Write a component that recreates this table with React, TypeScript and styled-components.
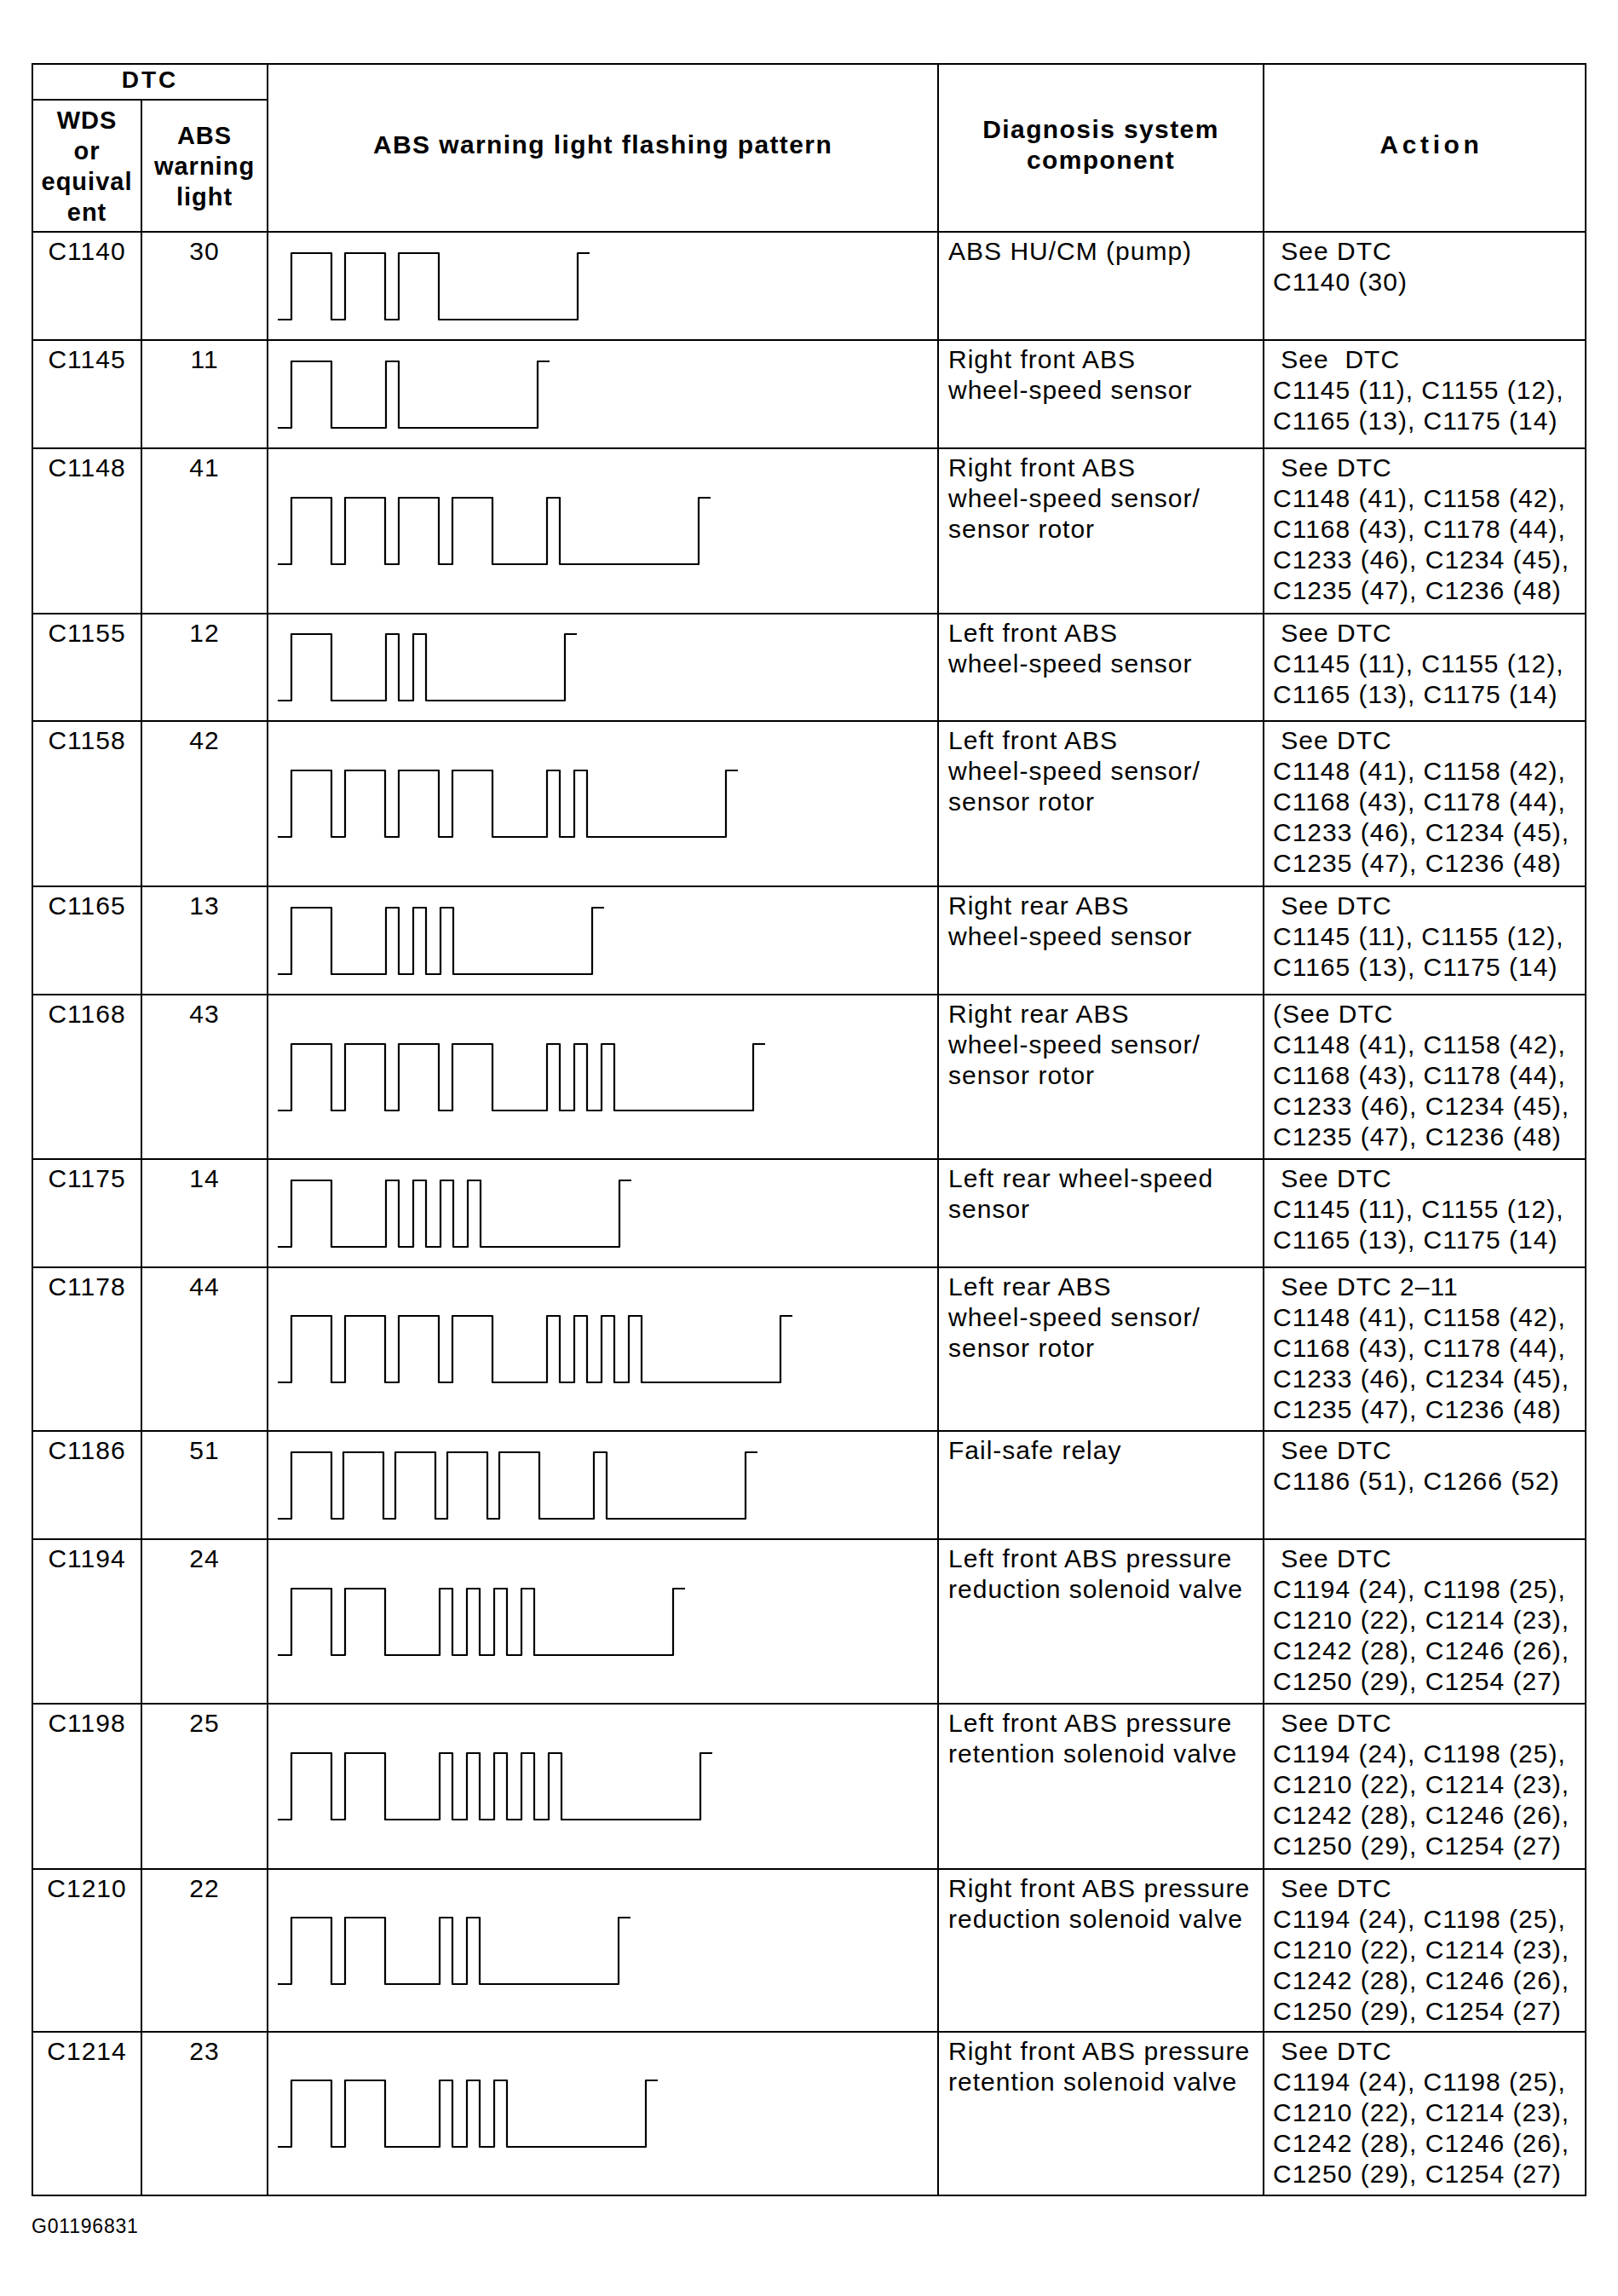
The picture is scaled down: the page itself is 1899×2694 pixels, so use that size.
import styled, { createGlobalStyle } from "styled-components";

const GlobalStyle = createGlobalStyle`
  body {
    margin: 0;
    background: #ffffff;
    color: #000000;
    font-family: "Liberation Sans", Arial, Helvetica, sans-serif;
  }
`;

const Page = styled.div`
  padding: 74px 0 40px 37px;
`;

const Table = styled.table`
  border-collapse: collapse;
  table-layout: fixed;
  width: 1825px;
`;

const HeadCell = styled.th<{ $spacing?: number; $size?: number; $lift?: number; $shift?: number }>`
  border: 2px solid #000;
  padding: 0 0 ${(p) => p.$lift ?? 0}px ${(p) => p.$shift ?? 0}px;
  font-weight: 700;
  font-size: ${(p) => p.$size ?? 29}px;
  line-height: 36px;
  letter-spacing: ${(p) => p.$spacing ?? 1.8}px;
  text-align: center;
  vertical-align: middle;
`;

const BodyRow = styled.tr<{ $h: number }>`
  height: ${(p) => p.$h}px;
`;

const TextCell = styled.td<{ $align?: "left" | "center"; $pad?: number }>`
  border: 2px solid #000;
  padding: 4px 0 0 ${(p) => p.$pad ?? 0}px;
  vertical-align: top;
  text-align: ${(p) => p.$align ?? "left"};
  font-size: 30px;
  line-height: 36px;
  letter-spacing: 1px;
  white-space: nowrap;
`;

const WaveCell = styled.td`
  border: 2px solid #000;
  padding: 0;
  vertical-align: middle;
`;

const Line = styled.div`
  display: block;
`;

const Wave = styled.svg`
  display: block;
`;

const Footnote = styled.div`
  margin-top: 22px;
  font-size: 23px;
  letter-spacing: 0.8px;
`;

type Row = {
  wds: string;
  abs: string;
  h: number;
  component: string[];
  action: string[];
};

const groupA = ["C1145 (11), C1155 (12),", "C1165 (13), C1175 (14)"];
const groupB = [
  "C1148 (41), C1158 (42),",
  "C1168 (43), C1178 (44),",
  "C1233 (46), C1234 (45),",
  "C1235 (47), C1236 (48)",
];
const groupC = [
  "C1194 (24), C1198 (25),",
  "C1210 (22), C1214 (23),",
  "C1242 (28), C1246 (26),",
  "C1250 (29), C1254 (27)",
];
const see = "\u00a0See DTC";

const rows: Row[] = [
  { wds: "C1140", abs: "30", h: 127, component: ["ABS HU/CM (pump)"], action: [see, "C1140 (30)"] },
  { wds: "C1145", abs: "11", h: 127, component: ["Right front ABS", "wheel-speed sensor"], action: ["\u00a0See\u00a0 DTC", ...groupA] },
  { wds: "C1148", abs: "41", h: 194, component: ["Right front ABS", "wheel-speed sensor/", "sensor rotor"], action: [see, ...groupB] },
  { wds: "C1155", abs: "12", h: 126, component: ["Left front ABS", "wheel-speed sensor"], action: [see, ...groupA] },
  { wds: "C1158", abs: "42", h: 194, component: ["Left front ABS", "wheel-speed sensor/", "sensor rotor"], action: [see, ...groupB] },
  { wds: "C1165", abs: "13", h: 127, component: ["Right rear ABS", "wheel-speed sensor"], action: [see, ...groupA] },
  { wds: "C1168", abs: "43", h: 193, component: ["Right rear ABS", "wheel-speed sensor/", "sensor rotor"], action: ["(See DTC", ...groupB] },
  { wds: "C1175", abs: "14", h: 127, component: ["Left rear wheel-speed", "sensor"], action: [see, ...groupA] },
  { wds: "C1178", abs: "44", h: 192, component: ["Left rear ABS", "wheel-speed sensor/", "sensor rotor"], action: ["\u00a0See DTC 2\u201311", ...groupB] },
  { wds: "C1186", abs: "51", h: 127, component: ["Fail-safe relay"], action: [see, "C1186 (51), C1266 (52)"] },
  { wds: "C1194", abs: "24", h: 193, component: ["Left front ABS pressure", "reduction solenoid valve"], action: [see, ...groupC] },
  { wds: "C1198", abs: "25", h: 194, component: ["Left front ABS pressure", "retention solenoid valve"], action: [see, ...groupC] },
  { wds: "C1210", abs: "22", h: 191, component: ["Right front ABS pressure", "reduction solenoid valve"], action: [see, ...groupC] },
  { wds: "C1214", abs: "23", h: 192, component: ["Right front ABS pressure", "retention solenoid valve"], action: [see, ...groupC] },
];

// flashing pattern: tens digit = long flashes, units digit = short flashes
const HIGH = 2;
const LOW = 80;

function wavePath(code: string): string {
  const longs = Number(code[0]);
  const shorts = Number(code[1]);
  let x = 27;
  let d = `M 11 ${LOW} H ${x}`;
  for (let i = 0; i < longs; i++) {
    d += ` V ${HIGH} H ${x + 47} V ${LOW}`;
    x += 47;
    if (i < longs - 1) {
      x += longs > 4 ? 14 : 16;
      d += ` H ${x}`;
    }
  }
  if (shorts > 0) {
    x += 64;
    d += ` H ${x}`;
    for (let i = 0; i < shorts; i++) {
      d += ` V ${HIGH} H ${x + 15} V ${LOW}`;
      x += 15;
      if (i < shorts - 1) {
        x += 17;
        d += ` H ${x}`;
      }
    }
  }
  x += 163;
  d += ` H ${x} V ${HIGH} H ${x + 14}`;
  return d;
}

function Lines({ items }: { items: string[] }) {
  return (
    <>
      {items.map((t, i) => (
        <Line key={i}>{t}</Line>
      ))}
    </>
  );
}

function App() {
  return (
    <Page>
      <GlobalStyle />
      <Table>
        <colgroup>
          <col style={{ width: 128 }} />
          <col style={{ width: 148 }} />
          <col style={{ width: 787 }} />
          <col style={{ width: 382 }} />
          <col style={{ width: 378 }} />
        </colgroup>
        <thead>
          <tr style={{ height: 40 }}>
            <HeadCell colSpan={2} $size={28} $spacing={3} $lift={4}>
              DTC
            </HeadCell>
            <HeadCell rowSpan={2} $size={30} $spacing={1.4} $lift={8}>
              ABS warning light flashing pattern
            </HeadCell>
            <HeadCell rowSpan={2} $size={30} $spacing={1.4} $lift={8}>
              Diagnosis system
              <br />
              component
            </HeadCell>
            <HeadCell rowSpan={2} $size={30} $spacing={4.6} $lift={8} $shift={16}>
              Action
            </HeadCell>
          </tr>
          <tr style={{ height: 155 }}>
            <HeadCell $spacing={1}>
              WDS
              <br />
              or
              <br />
              equival
              <br />
              ent
            </HeadCell>
            <HeadCell $spacing={1}>
              ABS
              <br />
              warning
              <br />
              light
            </HeadCell>
          </tr>
        </thead>
        <tbody>
          {rows.map((r) => (
            <BodyRow key={r.wds} $h={r.h}>
              <TextCell $align="center">{r.wds}</TextCell>
              <TextCell $align="center">{r.abs}</TextCell>
              <WaveCell>
                <Wave width="640" height="82" viewBox="0 0 640 82">
                  <path
                    d={wavePath(r.abs)}
                    fill="none"
                    stroke="#000"
                    strokeWidth="2.2"
                    strokeLinejoin="round"
                  />
                </Wave>
              </WaveCell>
              <TextCell $pad={11}>
                <Lines items={r.component} />
              </TextCell>
              <TextCell $pad={10}>
                <Lines items={r.action} />
              </TextCell>
            </BodyRow>
          ))}
        </tbody>
      </Table>
      <Footnote>G01196831</Footnote>
    </Page>
  );
}

export default App;
